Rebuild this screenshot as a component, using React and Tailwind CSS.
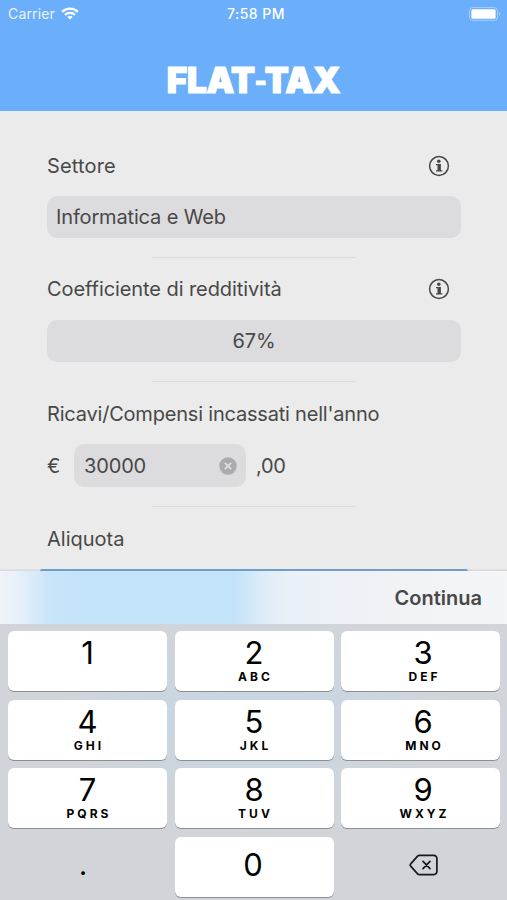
import React, { useState } from 'react';

const keys = [
  { digit: '1', letters: '' },
  { digit: '2', letters: 'ABC' },
  { digit: '3', letters: 'DEF' },
  { digit: '4', letters: 'GHI' },
  { digit: '5', letters: 'JKL' },
  { digit: '6', letters: 'MNO' },
  { digit: '7', letters: 'PQRS' },
  { digit: '8', letters: 'TUV' },
  { digit: '9', letters: 'WXYZ' },
];

function WifiIcon() {
  return (
    <svg width="18" height="13" viewBox="0 0 18 13" fill="none" stroke="white" strokeWidth="2.3">
      <path d="M1.1 4.9a11.2 11.2 0 0 1 15.8 0" />
      <path d="M4 7.9a7.1 7.1 0 0 1 10 0" />
      <path d="M9 12.6 6.4 10a3.7 3.7 0 0 1 5.2 0Z" fill="white" stroke="none" />
    </svg>
  );
}

function BatteryIcon() {
  return (
    <svg width="32" height="14" viewBox="0 0 32 14" fill="none">
      <rect x="0.6" y="0.6" width="27.8" height="12.8" rx="3" stroke="white" strokeOpacity="0.4" strokeWidth="1" />
      <rect x="2.4" y="2.2" width="24.2" height="9.6" rx="1.6" fill="white" />
      <path d="M30 5v4c1.3-.6 1.3-3.4 0-4Z" fill="white" fillOpacity="0.5" />
    </svg>
  );
}

function InfoIcon() {
  return (
    <svg width="22" height="22" viewBox="0 0 22 22" fill="#484848">
      <circle cx="11" cy="11" r="9.4" fill="none" stroke="#484848" strokeWidth="1.5" />
      <circle cx="10.8" cy="6.3" r="1.8" />
      <path d="M8 9h4.9v6.2h1.4v1.3H8v-1.3h1.5v-5H8Z" />
    </svg>
  );
}

function ClearIcon() {
  return (
    <svg width="18" height="18" viewBox="0 0 18 18">
      <circle cx="9" cy="9" r="8.7" fill="#ababad" />
      <path d="m5.8 5.8 6.4 6.4M12.2 5.8l-6.4 6.4" stroke="#e0e0e2" strokeWidth="1.7" />
    </svg>
  );
}

function BackspaceIcon() {
  return (
    <svg width="30" height="22" viewBox="0 0 30 22" fill="none" stroke="#17181a" strokeWidth="1.7" strokeLinejoin="round" strokeLinecap="round">
      <path d="M10.3 1.4h14.6a3 3 0 0 1 3 3v13.2a3 3 0 0 1-3 3H10.3a2.4 2.4 0 0 1-1.7-.7l-6.7-7.5a2 2 0 0 1 0-2.8l6.7-7.5a2.4 2.4 0 0 1 1.7-.7Z" />
      <path d="m14 7.3 7 7.4M21 7.3l-7 7.4" />
    </svg>
  );
}

function Divider() {
  return <div className="h-px w-[204px] bg-[#dcdcdd] mx-auto" />;
}

export default function App() {
  const [amount, setAmount] = useState('30000');

  const pressKey = (char) => setAmount((prev) => prev + char);

  return (
    <div className="w-[507px] h-[900px] overflow-hidden flex flex-col bg-[#ebebeb] text-[#484848] font-['Inter',sans-serif]">
      {/* Header */}
      <header className="h-[111px] shrink-0 bg-[#6baef9] text-white">
        <div className="h-[27px] grid grid-cols-3 items-center pl-2 pr-[6px] text-[14px]">
          <div className="flex items-center gap-[6px]">
            <span className="text-white/85 tracking-[0.15px]">Carrier</span>
            <WifiIcon />
          </div>
          <span className="text-center font-medium tracking-[0.5px] pl-[3px]">7:58 PM</span>
          <div className="flex justify-end">
            <BatteryIcon />
          </div>
        </div>
        <h1 className="mt-[31px] flex justify-center text-[35px] leading-[44px] font-black tracking-[-0.2px] [-webkit-text-stroke:1.2px_white]">
          <span>FLAT</span>
          <span className="text-[25px] leading-[47px] tracking-[-2px]">-</span>
          <span>TAX</span>
        </h1>
      </header>

      {/* Form */}
      <main className="h-[460px] shrink-0 flex flex-col px-[47px] pt-[42px] text-[20px] leading-[26px]">
        <div className="flex justify-between items-center pr-[10px]">
          <label className="tracking-[0.15px]">Settore</label>
          <InfoIcon />
        </div>
        <div className="mt-[17px] mb-[19px] h-[42px] shrink-0 rounded-[10px] bg-[#dcdcde] px-[9px] flex items-center w-[414px] tracking-[-0.15px]">
          Informatica e Web
        </div>
        <Divider />

        <div className="mt-[18px] flex justify-between items-center pr-[10px]">
          <label className="tracking-[-0.08px]">Coefficiente di redditività</label>
          <InfoIcon />
        </div>
        <div className="mt-[18px] mb-[19px] h-[42px] shrink-0 rounded-[10px] bg-[#dcdcde] flex items-center justify-center w-[414px] tracking-[-0.2px]">
          67%
        </div>
        <Divider />

        <label className="mt-[19px] tracking-[-0.2px]">Ricavi/Compensi incassati nell'anno</label>
        <div className="mt-[17px] mb-[19px] flex items-center">
          <span className="w-[27px]">€</span>
          <div className="w-[172px] h-[43px] rounded-[10px] bg-[#dcdcde] flex items-center pl-[10px] pr-[9px]">
            <input
              type="text"
              value={amount}
              onChange={(e) => setAmount(e.target.value)}
              className="w-full min-w-0 bg-transparent outline-none tracking-[-0.15px]"
            />
            <button onClick={() => setAmount('')} className="shrink-0">
              <ClearIcon />
            </button>
          </div>
          <span className="ml-[10px] tracking-[-0.3px]">,00</span>
        </div>
        <Divider />

        <label className="mt-[19px]">Aliquota</label>
        <div className="mt-auto -mx-[47px] px-[40px] h-[2px] shrink-0 bg-[linear-gradient(#e4e4e5,#d6d7d9)]">
          <div className="h-[2px] w-[428px] rounded-t-[2px] bg-[#6f9fc8]" />
        </div>
      </main>

      {/* Toolbar */}
      <div className="h-[53px] shrink-0 flex items-center justify-end pr-[25px] bg-[linear-gradient(90deg,#f0f3f9_0px,#e6eff9_20px,#c8e5f9_50px,#c3e3f8_80px,#c3e3f8_235px,#dfecf8_264px,#e8f0f8_285px,#eff1f6_350px,#f4f5f7_507px)]">
        <button className="text-[20px] font-semibold">Continua</button>
      </div>

      {/* Keypad */}
      <div className="flex-1 grid grid-cols-3 auto-rows-[60px] gap-x-[7.5px] gap-y-[8.6px] pl-2 pr-[7px] pt-[7px] text-black bg-[radial-gradient(ellipse_200px_100px_at_250px_90px,#c5d6e5,#d1d5da)]">
        {keys.map((key) => (
          <button
            key={key.digit}
            onClick={() => pressKey(key.digit)}
            className="rounded-[6px] bg-white shadow-[0_1px_0_#8b8f94] flex flex-col items-center pt-[5px] nth-[3n]:pl-[5px]"
          >
            <span className="text-[31px] leading-[33px]">{key.digit}</span>
            <span className="text-[12px] leading-[16px] font-bold tracking-[3px] pl-[3px]">{key.letters}</span>
          </button>
        ))}
        <button onClick={() => pressKey('.')} className="text-[28px] pr-[9px] pb-1">
          .
        </button>
        <button onClick={() => pressKey('0')} className="rounded-[6px] bg-white shadow-[0_1px_0_#8b8f94] text-[31px] pb-[3px] pr-[2px]">
          0
        </button>
        <button onClick={() => setAmount(amount.slice(0, -1))} className="flex items-center justify-center pl-[7px] pb-[3px]">
          <BackspaceIcon />
        </button>
      </div>
    </div>
  );
}
